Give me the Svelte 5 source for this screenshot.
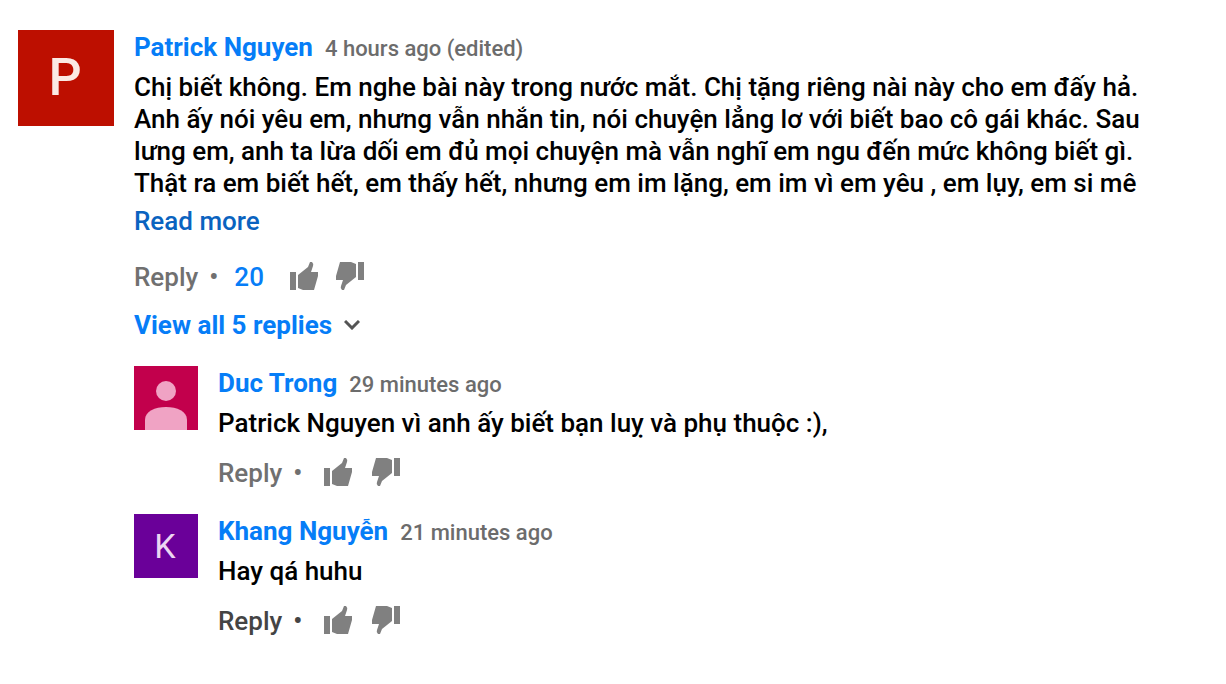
<script>
  const comment = {
    author: 'Patrick Nguyen',
    time: '4 hours ago (edited)',
    text: 'Chị biết không. Em nghe bài này trong nước mắt. Chị tặng riêng nài này cho em đấy hả. Anh ấy nói yêu em, nhưng vẫn nhắn tin, nói chuyện lẳng lơ với biết bao cô gái khác. Sau lưng em, anh ta lừa dối em đủ mọi chuyện mà vẫn nghĩ em ngu đến mức không biết gì. Thật ra em biết hết, em thấy hết, nhưng em im lặng, em im vì em yêu , em lụy, em si mê',
    likes: 20
  };

  const replies = [
    {
      author: 'Duc Trong',
      time: '29 minutes ago',
      text: 'Patrick Nguyen vì anh ấy biết bạn luỵ và phụ thuộc :),',
      initial: '',
      tone: 'crimson',
      active: false
    },
    {
      author: 'Khang Nguyễn',
      time: '21 minutes ago',
      text: 'Hay qá huhu',
      initial: 'K',
      tone: 'purple',
      active: true
    }
  ];
</script>

{#snippet thumbs()}
  <div class="thumbs">
    <button aria-label="Like">
      <svg viewBox="0 0 28 28" aria-hidden="true">
        <path d="M0 10H6V28H0ZM8 13L18 5L20 0H22Q24 2 23 4L21 10H28V14L24 28H13L8 26Z" />
      </svg>
    </button>
    <button aria-label="Dislike">
      <svg viewBox="0 0 28 28" aria-hidden="true">
        <path transform="rotate(180 14 14)" d="M0 10H6V28H0ZM8 13L18 5L20 0H22Q24 2 23 4L21 10H28V14L24 28H13L8 26Z" />
      </svg>
    </button>
  </div>
{/snippet}

{#snippet heading(item)}
  <header>
    <a class="author" href="#channel">{item.author}</a>
    <a class="time" href="#comment">{item.time}</a>
  </header>
{/snippet}

<main>
  <article class="comment">
    <div class="avatar large red">P</div>
    <div class="body">
      {@render heading(comment)}
      <p>{comment.text}</p>
      <button class="more">Read more</button>
      <div class="actions">
        <button class="reply">Reply</button>
        <span class="dot">•</span>
        <span class="likes">{comment.likes}</span>
        {@render thumbs()}
      </div>
      <button class="view">
        View all 5 replies
        <svg viewBox="0 0 16 10" aria-hidden="true"><path d="M1 1L8 8L15 1" /></svg>
      </button>

      <section class="replies">
        {#each replies as item}
          <article class="comment nested">
            <div class="avatar {item.tone}">
              {#if item.initial}
                {item.initial}
              {:else}
                <svg viewBox="0 0 64 64" aria-hidden="true">
                  <circle cx="32" cy="25" r="10" />
                  <path d="M11 64V54C11 45 21 41 32 41S53 45 53 54V64Z" />
                </svg>
              {/if}
            </div>
            <div class="body">
              {@render heading(item)}
              <p>{item.text}</p>
              <div class="actions">
                <button class="reply" class:active={item.active}>Reply</button>
                <span class="dot" class:active={item.active}>•</span>
                {@render thumbs()}
              </div>
            </div>
          </article>
        {/each}
      </section>
    </div>
  </article>
</main>

<style>
  :global(body) {
    margin: 0;
    background: #fff;
  }

  main {
    padding: 30px 60px 30px 18px;
    font-family: Roboto, sans-serif;
    font-size: 26px;
    font-weight: 500;
    line-height: 32px;
    color: #000;
  }

  .comment {
    display: flex;
    align-items: flex-start;
    gap: 20px;
  }

  .body {
    flex: 1;
    min-width: 0;
    display: flex;
    flex-direction: column;
    align-items: flex-start;
  }

  .avatar {
    flex: none;
    box-sizing: border-box;
    display: flex;
    align-items: center;
    justify-content: center;
    width: 64px;
    height: 64px;
    font-size: 34px;
    font-weight: 400;
    color: #ecd6f2;
  }

  .avatar.large {
    width: 96px;
    height: 96px;
    font-size: 52px;
    font-weight: 500;
    color: #fbeae4;
  }

  .avatar svg {
    width: 100%;
    height: 100%;
    fill: #f0a3c4;
  }

  .red {
    padding-right: 2px;
    background: #bd0f00;
  }

  .crimson {
    background: #c2004c;
  }

  .purple {
    padding-right: 2px;
    background: #6a0099;
  }

  header {
    display: flex;
    align-items: baseline;
    gap: 12px;
    padding-top: 1px;
    margin-bottom: 6px;
  }

  a {
    text-decoration: none;
  }

  .author {
    font-weight: 700;
    color: #067df7;
  }

  .time {
    font-size: 22px;
    color: #6c6c6c;
  }

  p {
    margin: 0;
  }

  button {
    padding: 0;
    border: 0;
    background: none;
    font: inherit;
    color: inherit;
    cursor: pointer;
  }

  .more {
    margin-top: 6px;
    color: #0a63c0;
  }

  .actions {
    display: flex;
    align-items: center;
    margin-top: 24px;
    color: #707070;
  }

  .nested .actions {
    margin-top: 18px;
  }

  .active {
    color: #444;
  }

  .dot {
    margin: 0 10px 0 11px;
  }

  .likes {
    margin: 0 14px 0 6px;
    color: #067df7;
  }

  .thumbs {
    display: flex;
    gap: 18px;
    margin: 0 0 2px 12px;
  }

  .nested .thumbs {
    gap: 20px;
  }

  .thumbs button {
    display: flex;
  }

  .thumbs svg {
    width: 28px;
    height: 28px;
    fill: #808080;
  }

  .view {
    display: flex;
    align-items: center;
    gap: 12px;
    margin-top: 16px;
    font-weight: 700;
    color: #067df7;
  }

  .view svg {
    width: 16px;
    height: 10px;
    fill: none;
    stroke: #555;
    stroke-width: 3;
  }

  .replies {
    display: flex;
    flex-direction: column;
    gap: 25px;
    margin-top: 25px;
  }
</style>
